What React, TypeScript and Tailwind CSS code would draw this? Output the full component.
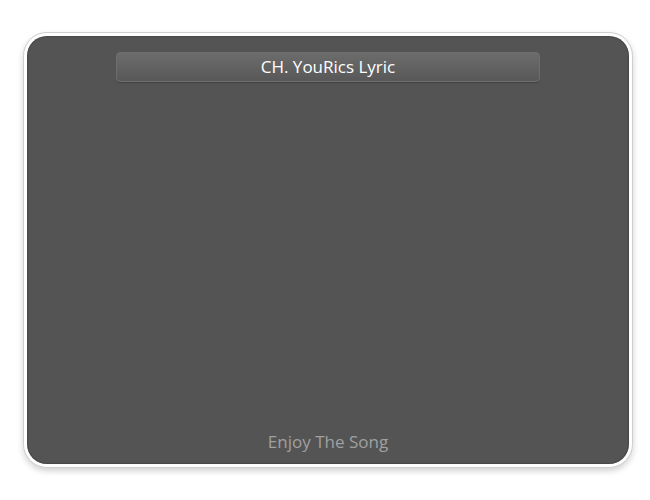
const App = () => {
  return (
    <div className="min-h-[500px] w-[650px] bg-white pt-[32px] pl-[23px]">
      <div className="w-[610px] rounded-[24px] border border-[#cfcfcf] bg-white p-[3px] shadow-[0_3px_6px_rgba(0,0,0,0.18)]">
        <div className="flex h-[428px] flex-col items-center rounded-[20px] bg-[#545454] pt-[16px] pb-[10px] shadow-[inset_0_0_2px_rgba(0,0,0,0.5)]">
          <div className="flex h-[30px] w-[424px] items-center justify-center rounded-[4px] border border-[#6f6f6f] bg-gradient-to-b from-[#6c6c6c] to-[#585858] shadow-[0_1px_1px_rgba(0,0,0,0.25)]">
            <span className="font-['Open_Sans',sans-serif] text-[17px] font-medium text-white">
              CH. YouRics Lyric
            </span>
          </div>
          <div className="flex-1" />
          <span className="font-['Open_Sans',sans-serif] text-[17px] font-medium text-[#a0a0a0]">
            Enjoy The Song
          </span>
        </div>
      </div>
    </div>
  );
};

export default App;
